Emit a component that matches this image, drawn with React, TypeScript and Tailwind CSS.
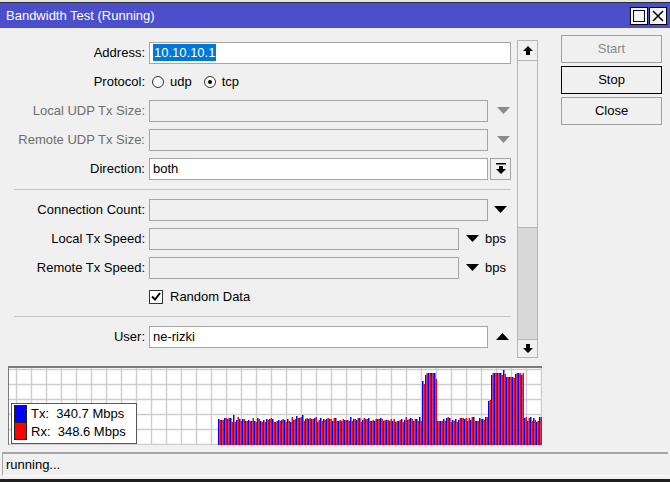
import React from "react";

// simple seeded random so the chart stays the same each run
function seeded(seed: number) {
  let s = seed;
  return () => {
    s = (s * 1103515245 + 12345) % 2147483648;
    return s / 2147483648;
  };
}

const TALL: Record<number, [number, number]> = {
  68: [64, 61],
  69: [70, 72],
  70: [72, 72],
  71: [72, 72],
  72: [72, 66],
  90: [44, 45],
  91: [70, 72],
  92: [72, 72],
  93: [72, 72],
  94: [72, 70],
  95: [75, 71],
  96: [68, 68],
  97: [68, 68],
  98: [68, 67],
  99: [71, 72],
  100: [72, 72],
  101: [70, 72],
};

const bars = (() => {
  const r = seeded(11);
  const out: [number, number][] = [];
  for (let i = 0; i < 108; i++) {
    if (TALL[i]) {
      out.push(TALL[i]);
      continue;
    }
    let tx = 23 + Math.round(r() * 5);
    let rx = 23 + Math.round(r() * 5);
    if (r() > 0.93) tx += 4;
    out.push([tx, rx]);
  }
  return out;
})();

function DownTri({ gray = false }: { gray?: boolean }) {
  return (
    <svg width="13" height="7" viewBox="0 0 13 7">
      <polygon points="0,0 13,0 6.5,7" fill={gray ? "#8c8c8c" : "#000"} />
    </svg>
  );
}

function UpTri() {
  return (
    <svg width="13" height="7" viewBox="0 0 13 7">
      <polygon points="0,7 13,7 6.5,0" fill="#000" />
    </svg>
  );
}

function Label({ children, dim = false }: { children: React.ReactNode; dim?: boolean }) {
  return (
    <div className={`w-[145px] shrink-0 text-right ${dim ? "text-[#6d6d6d]" : "text-black"}`}>
      {children}
    </div>
  );
}

function Row({ children }: { children: React.ReactNode }) {
  return <div className="h-[29px] shrink-0 flex items-center">{children}</div>;
}

function Box({ w, white = false, children }: { w: string; white?: boolean; children?: React.ReactNode }) {
  return (
    <div
      className={`${w} ml-[4px] h-[22px] shrink-0 border border-[#a5a5a5] flex items-center px-[3px] ${
        white ? "bg-white" : "bg-[#f0f0f0]"
      }`}
    >
      {children}
    </div>
  );
}

function Radio({ on }: { on?: boolean }) {
  return (
    <span className="w-[12px] h-[12px] rounded-full border border-[#333] bg-white flex items-center justify-center">
      {on && <span className="w-[4px] h-[4px] rounded-full bg-black" />}
    </span>
  );
}

function Chart() {
  const W = 533;
  const H = 77;
  const vlines = [];
  for (let x = 7; x < W; x += 15) vlines.push(x);
  const hlines = [1, 16, 31, 46, 61, 76];
  return (
    <div className="relative ml-[8px] mt-[8px] w-[534px] h-[79px] shrink-0 bg-white border-t-2 border-l border-[#7a7a7a]">
      <svg width={W} height={H} viewBox={`0 0 ${W} ${H}`} className="block">
        {vlines.map((x) => (
          <line key={"v" + x} x1={x + 0.5} y1={0} x2={x + 0.5} y2={H} stroke="#cdcdcd" strokeWidth={1.4} />
        ))}
        {hlines.map((y) => (
          <line key={"h" + y} x1={0} y1={y + 0.5} x2={W} y2={y + 0.5} stroke="#cdcdcd" strokeWidth={1.4} />
        ))}
        {bars.map(([tx, rx], i) => {
          const x = 209 + i * 3;
          return (
            <g key={i}>
              <rect x={x} y={H - tx} width={1.5} height={tx} fill="#0000ff" />
              <rect x={x + 1.5} y={H - rx} width={1.5} height={rx} fill="#ff0000" />
            </g>
          );
        })}
      </svg>
      <div className="absolute left-[2px] top-[35px] w-[126px] h-[41px] bg-white border border-[#5a5a5a] pl-[2px] pt-[1px] flex flex-col">
        <div className="flex items-center h-[17px]">
          <span className="w-[13px] h-[17px] bg-[#0000ff] border border-[#222]" />
          <span className="ml-[4px] whitespace-pre leading-none">Tx:  340.7 Mbps</span>
        </div>
        <div className="flex items-center h-[18px]">
          <span className="w-[13px] h-[18px] bg-[#ff0000] border border-[#222]" />
          <span className="ml-[4px] whitespace-pre leading-none">Rx:  348.6 Mbps</span>
        </div>
      </div>
    </div>
  );
}

function Scrollbar() {
  return (
    <div className="ml-[6px] mt-[2px] w-[21px] h-[318px] shrink-0 flex flex-col bg-[#d8d8d8] border border-[#b5b5b5]">
      <div className="h-[20px] bg-[#f0f0f0] border-b border-[#b5b5b5] flex items-center justify-center">
        <svg width="10" height="9" viewBox="0 0 10 9">
          <polygon points="5,0 10,5 7,5 7,9 3,9 3,5 0,5" fill="#000" />
        </svg>
      </div>
      <div className="h-[167px] bg-[#f0f0f0] border-b border-[#b5b5b5]" />
      <div className="flex-1" />
      <div className="h-[18px] bg-[#f0f0f0] border-t border-[#b5b5b5] flex items-center justify-center">
        <svg width="10" height="9" viewBox="0 0 10 9">
          <polygon points="3,0 7,0 7,4 10,4 5,9 0,4 3,4" fill="#000" />
        </svg>
      </div>
    </div>
  );
}

export default function App() {
  return (
    <div className="w-[670px] h-[482px] flex flex-col bg-[#f0f0f0] text-[13px] text-black font-['Liberation_Sans',Arial,sans-serif] overflow-hidden">
      <div className="h-[2px] shrink-0 bg-[#e6e6e6]" />
      <div className="h-px shrink-0 bg-[#2b2b2b]" />

      {/* title bar */}
      <div className="h-[25px] shrink-0 bg-[#4b4fcb] flex items-center pl-[6px] pr-[3px]">
        <span className="text-white text-[13px]">Bandwidth Test (Running)</span>
        <div className="ml-auto flex gap-px">
          <div className="w-[18px] h-[18px] bg-[#f4f4fa] border border-black flex items-center justify-center">
            <span className="w-[12px] h-[12px] border-[1.5px] border-black" />
          </div>
          <div className="w-[18px] h-[18px] bg-[#f4f4fa] border border-black flex items-center justify-center">
            <svg width="12" height="12" viewBox="0 0 12 12">
              <path d="M1 1 L11 11 M11 1 L1 11" stroke="#000" strokeWidth="1.6" />
            </svg>
          </div>
        </div>
      </div>

      <div className="flex-1 flex flex-col">
        <div className="flex shrink-0">
          <div className="w-[542px] shrink-0 flex flex-col">
            <div className="flex pt-[10px] items-start">
              <div className="w-[511px] shrink-0 flex flex-col">
                <Row>
                  <Label>Address:</Label>
                  <Box w="w-[362px]" white>
                    <span className="bg-[#0078d7] text-white px-px leading-[17px]">10.10.10.1</span>
                  </Box>
                </Row>
                <Row>
                  <Label>Protocol:</Label>
                  <div className="ml-[7px] flex items-center">
                    <Radio />
                    <span className="ml-[6px]">udp</span>
                    <span className="ml-[12px]" />
                    <Radio on />
                    <span className="ml-[6px]">tcp</span>
                  </div>
                </Row>
                <Row>
                  <Label dim>Local UDP Tx Size:</Label>
                  <Box w="w-[339px]" />
                  <span className="ml-[9px]">
                    <DownTri gray />
                  </span>
                </Row>
                <Row>
                  <Label dim>Remote UDP Tx Size:</Label>
                  <Box w="w-[339px]" />
                  <span className="ml-[9px]">
                    <DownTri gray />
                  </span>
                </Row>
                <Row>
                  <Label>Direction:</Label>
                  <Box w="w-[339px]" white>
                    <span>both</span>
                  </Box>
                  <div className="ml-[2px] w-[21px] h-[22px] border border-[#a5a5a5] flex items-center justify-center">
                    <svg width="10" height="11" viewBox="0 0 10 11">
                      <rect x="0" y="0" width="10" height="1.5" fill="#000" />
                      <polygon points="3,3 7,3 7,6 10,6 5,11 0,6 3,6" fill="#000" />
                    </svg>
                  </div>
                </Row>
                <div className="h-[12px] flex items-center pl-[14px]">
                  <div className="w-full h-px bg-[#c4c4c4]" />
                </div>
                <Row>
                  <Label>Connection Count:</Label>
                  <Box w="w-[339px]" />
                  <span className="ml-[6px]">
                    <DownTri />
                  </span>
                </Row>
                <Row>
                  <Label>Local Tx Speed:</Label>
                  <Box w="w-[310px]" />
                  <span className="ml-[7px]">
                    <DownTri />
                  </span>
                  <span className="ml-[6px]">bps</span>
                </Row>
                <Row>
                  <Label>Remote Tx Speed:</Label>
                  <Box w="w-[310px]" />
                  <span className="ml-[7px]">
                    <DownTri />
                  </span>
                  <span className="ml-[6px]">bps</span>
                </Row>
                <Row>
                  <div className="w-[149px] shrink-0" />
                  <span className="w-[14px] h-[14px] bg-white border border-[#333] flex items-center justify-center">
                    <svg width="10" height="9" viewBox="0 0 10 9">
                      <path d="M1 4.5 L4 7.5 L9 1" stroke="#000" strokeWidth="2" fill="none" />
                    </svg>
                  </span>
                  <span className="ml-[7px]">Random Data</span>
                </Row>
                <div className="h-[11px] flex items-center pl-[14px]">
                  <div className="w-full h-px bg-[#c4c4c4]" />
                </div>
                <Row>
                  <Label>User:</Label>
                  <Box w="w-[339px]" white>
                    <span>ne-rizki</span>
                  </Box>
                  <span className="ml-[8px]">
                    <UpTri />
                  </span>
                </Row>
              </div>
              <Scrollbar />
            </div>
            <Chart />
          </div>

          {/* buttons */}
          <div className="ml-[19px] mt-[7px] w-[101px] flex flex-col gap-[3px]">
            <div className="h-[28px] border border-[#a0a0a0] flex items-center justify-center text-[#8a8a8a]">Start</div>
            <div className="h-[28px] border border-black flex items-center justify-center">Stop</div>
            <div className="h-[28px] border border-[#a0a0a0] flex items-center justify-center">Close</div>
          </div>
        </div>

        {/* status bar */}
        <div className="mt-[7px] mx-[2px] h-[24px] shrink-0 border-t-2 border-l border-[#a6a6a6] border-b border-b-white flex items-center pl-[3px]">
          running...
        </div>
        <div className="flex-1" />
      </div>
      <div className="h-[3px] shrink-0 bg-[#1e1e1e]" />
    </div>
  );
}
